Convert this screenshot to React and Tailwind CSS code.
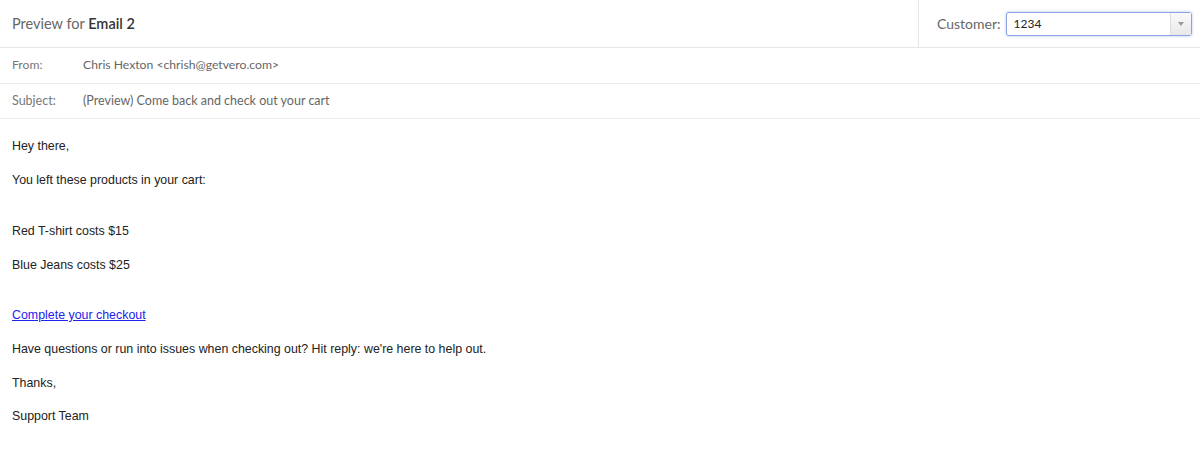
export default function App() {
  const sans = { fontFamily: "Lato, 'Open Sans', sans-serif" };
  return (
    <div className="w-[1200px] h-[451px] bg-white overflow-hidden">
      <div className="flex h-[48px] border-b border-[#e6e6e6]" style={sans}>
        <div className="flex-1 flex items-center pl-[12px] text-[14.5px] text-[#666]">
          Preview for&nbsp;<span className="font-semibold text-[#333]">Email 2</span>
        </div>
        <div className="w-[282px] border-l border-[#e6e6e6] flex items-center pl-[18px] gap-[5px]">
          <span className="text-[14px] text-[#666]">Customer:</span>
          <div className="w-[186px] h-[24px] rounded-[3px] border border-[#8da3e0] shadow-[0_0_3px_rgba(90,120,220,0.45)] flex items-stretch bg-white">
            <span className="flex-1 flex items-center pl-[7px] text-[12px] text-[#222]">1234</span>
            <span className="w-[21px] border-l border-[#ddd] bg-gradient-to-b from-[#fafafa] to-[#e8e8e8] flex items-center justify-center">
              <svg width="6" height="4" viewBox="0 0 6 4"><path d="M0 0h6L3 4z" fill="#999" /></svg>
            </span>
          </div>
        </div>
      </div>
      <div className="flex items-center h-[36px] border-b border-[#ececec] px-[12px] text-[12.2px]" style={sans}>
        <span className="w-[71px] text-[#777]">From:</span>
        <span className="text-[#666]">Chris Hexton &lt;chrish@getvero.com&gt;</span>
      </div>
      <div className="flex items-center h-[35px] border-b border-[#ececec] px-[12px] text-[12.5px]" style={sans}>
        <span className="w-[71px] text-[#777]">Subject:</span>
        <span className="text-[#666]">(Preview) Come back and check out your cart</span>
      </div>
      <div className="px-[12px] pt-[19px] text-[12.4px] leading-[16px] text-[#222]" style={{ fontFamily: "'Liberation Sans', Arial, sans-serif" }}>
        <p className="mb-[18px]">Hey there,</p>
        <p className="mb-[18px]">You left these products in your cart:</p>
        <div className="h-[17px]" />
        <p className="mb-[18px]">Red T-shirt costs $15</p>
        <p className="mb-[18px]">Blue Jeans costs $25</p>
        <div className="h-[16px]" />
        <p className="mb-[18px]"><a className="text-[#2222ee] underline">Complete your checkout</a></p>
        <p className="mb-[18px]">Have questions or run into issues when checking out? Hit reply: we're here to help out.</p>
        <p className="mb-[17px]">Thanks,</p>
        <p className="mb-[18px]">Support Team</p>
      </div>
    </div>
  );
}
